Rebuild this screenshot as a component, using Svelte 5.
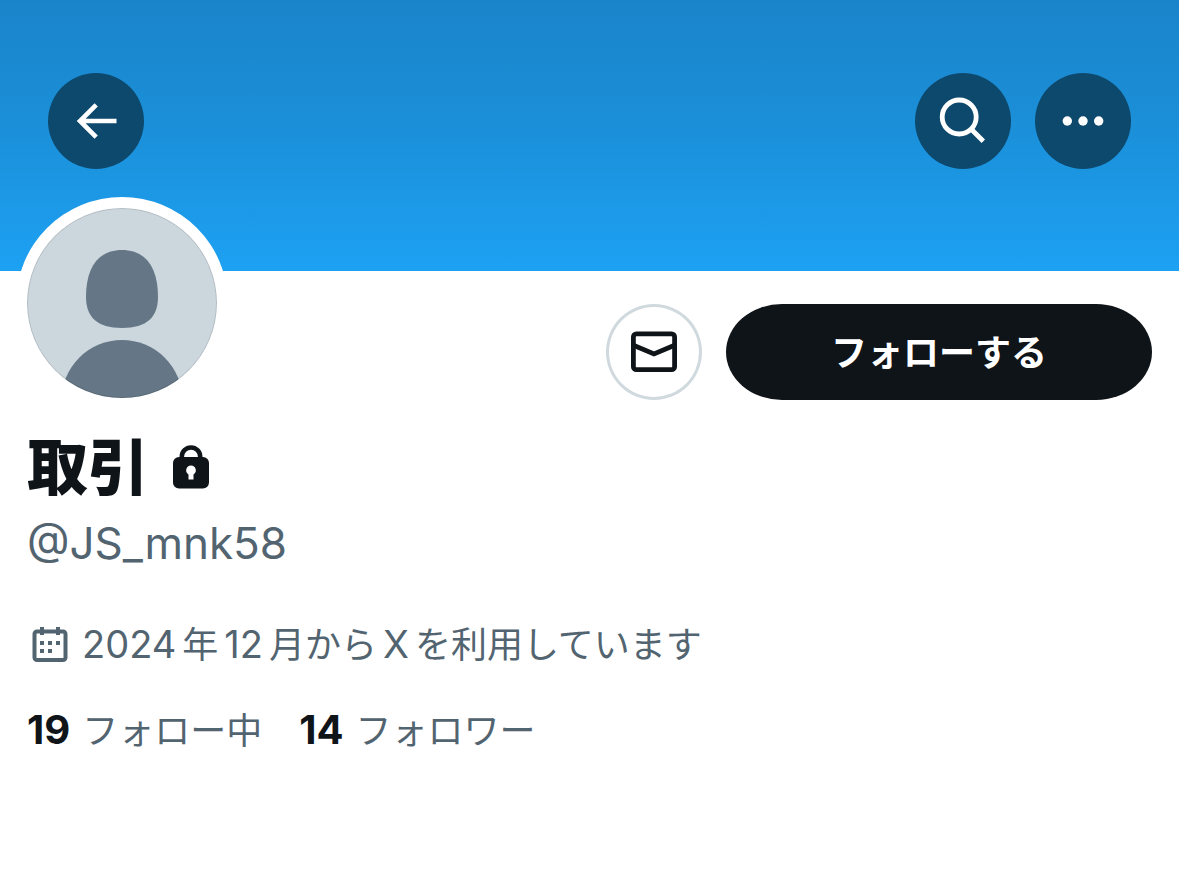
<script>
    const user = {
        name: '取引',
        handle: '@JS_mnk58',
        following: 19,
        followers: 14
    };

    // latin and japanese runs are sized separately
    const joined = [
        { text: '2024', latin: true },
        { text: '年' },
        { text: '12', latin: true },
        { text: '月から' },
        { text: 'X', latin: true },
        { text: 'を利用しています' }
    ];
</script>

<main>
    <header class="banner">
        <button class="round" aria-label="戻る">
            <svg viewBox="0 0 96 96" fill="none" stroke="#fff" stroke-width="4.6">
                <path d="M68.5 48H32M48.2 31.8 32 48l16.2 16.2" />
            </svg>
        </button>
        <div class="tools">
            <button class="round" aria-label="検索">
                <svg viewBox="0 0 96 96" fill="none" stroke="#fff" stroke-width="4.8">
                    <circle cx="44.2" cy="44" r="17" />
                    <path d="m56.3 56.2 12 12" />
                </svg>
            </button>
            <button class="round" aria-label="もっと見る">
                <svg viewBox="0 0 96 96" fill="#fff">
                    <circle cx="32.3" cy="48" r="4.7" />
                    <circle cx="48" cy="48" r="4.7" />
                    <circle cx="63.7" cy="48" r="4.7" />
                </svg>
            </button>
        </div>
    </header>

    <section class="profile">
        <div class="top">
            <div class="avatar">
                <svg viewBox="0 0 190 190" fill="#657786">
                    <path d="M95 42C70 42 59 61 59 89c0 20 11 31 36 31s36-11 36-31C131 61 120 42 95 42Z" />
                    <circle cx="95" cy="192.5" r="60.5" />
                    <circle cx="95" cy="95" r="94.5" fill="none" stroke="#000" stroke-opacity="0.12" />
                </svg>
            </div>
            <div class="actions">
                <button class="message" aria-label="メッセージ">
                    <svg viewBox="0 0 96 96" fill="none" stroke="#0f1419" stroke-width="4.8">
                        <rect x="27.4" y="29.9" width="41.2" height="35.8" rx="3" />
                        <path d="m28 41.5 20 8.4 20-8.4" />
                    </svg>
                </button>
                <button class="follow">フォローする</button>
            </div>
        </div>

        <h1>
            {user.name}
            <svg class="lock" viewBox="0 0 38 46" aria-label="非公開">
                <path d="M9.8 15v-3.300a9.200 9.200 0 0 1 18.400 0V15" fill="none" stroke="#0f1419" stroke-width="4.600" />
                <rect x="1" y="12" width="36" height="31.500" rx="6" fill="#0f1419" />
                <path d="M19 20.500a4.800 4.800 0 0 0-2.500 8.900V34.500h5v-5.100a4.800 4.800 0 0 0-2.500-8.900Z" fill="#fff" />
            </svg>
        </h1>
        <p class="handle">{user.handle}</p>

        <p class="joined">
            <svg class="calendar" viewBox="0 0 36 36">
                <rect x="2.500" y="4.500" width="31" height="28.500" rx="2.500" fill="none" stroke="#536471" stroke-width="4" />
                <path d="M8 0h4v8H8zM24 0h4v8h-4zM8 14h4v4H8zM16 14h4v4h-4zM24 14h4v4h-4zM8 22h4v4H8zM16 22h4v4h-4z" fill="#536471" />
            </svg>
            <span>{#each joined as part}<span class:latin={part.latin}>{part.text}</span>{/each}</span>
        </p>

        <nav class="stats">
            <a href="#following"><b>{user.following}</b>フォロー中</a>
            <a href="#followers"><b>{user.followers}</b>フォロワー</a>
        </nav>
    </section>
</main>

<style>
    :global(body) {
        margin: 0;
        background: #fff;
    }
    main {
        font-family: Inter, "Noto Sans CJK JP", sans-serif;
        color: #0f1419;
    }
    button {
        border: none;
        padding: 0;
        font-family: inherit;
        cursor: pointer;
    }
    svg {
        display: block;
    }
    .banner {
        display: flex;
        justify-content: space-between;
        padding: 73px 48px 102px;
        background: linear-gradient(#1a84ca, #1b8fd8 45%, #1da1f3);
    }
    .tools {
        display: flex;
        gap: 24px;
    }
    .round {
        width: 96px;
        height: 96px;
        border-radius: 50%;
        background: #0d496d;
    }
    .profile {
        padding: 33px 27px;
    }
    .top {
        display: flex;
        justify-content: space-between;
        align-items: flex-start;
        height: 96px;
    }
    .avatar {
        width: 190px;
        height: 190px;
        margin-top: -96px;
        border-radius: 50%;
        overflow: hidden;
        background: #ccd6dd;
        box-shadow: 0 0 0 11px #fff;
    }
    .actions {
        display: flex;
        gap: 24px;
    }
    .message {
        width: 96px;
        height: 96px;
        border-radius: 50%;
        background: #fff;
        box-shadow: inset 0 0 0 3px #cfd9de;
    }
    .follow {
        height: 96px;
        padding: 0 105px 4px;
        border-radius: 56px / 48px;
        background: #0f1419;
        color: #fff;
        font-size: 36px;
        font-weight: 700;
    }
    h1 {
        display: flex;
        align-items: center;
        gap: 23px;
        margin: 32px 0 0;
        font-size: 61px;
        line-height: 72px;
        font-weight: 900;
    }
    .lock {
        width: 38px;
        height: 46px;
    }
    p {
        margin: 0;
        color: #536471;
    }
    .handle {
        margin-top: 11px;
        font-size: 44px;
        line-height: 56px;
    }
    .joined {
        display: flex;
        align-items: center;
        gap: 14px;
        margin: 45px 0 0 5px;
        font-size: 36px;
        line-height: 56px;
    }
    .calendar {
        width: 36px;
        height: 36px;
    }
    .latin {
        margin-right: 6px;
        font-size: 38px;
    }
    .latin:not(:first-child) {
        margin-left: 6px;
    }
    .stats {
        display: flex;
        gap: 37px;
        margin-top: 29px;
        font-size: 36px;
        line-height: 56px;
    }
    .stats a {
        color: #536471;
        text-decoration: none;
    }
    .stats b {
        margin-right: 12px;
        color: #0f1419;
        font-size: 40px;
        font-weight: 700;
    }
</style>
